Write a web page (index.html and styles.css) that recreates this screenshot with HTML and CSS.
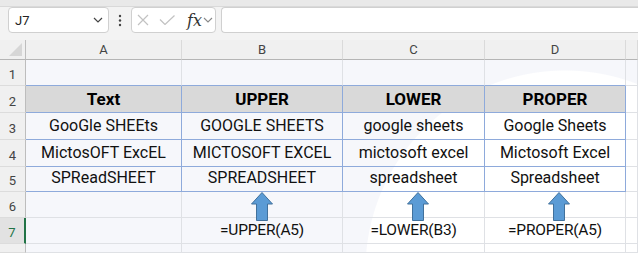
FILE: index.html
```html
<!DOCTYPE html>
<html lang="en">
<head>
    <meta charset="UTF-8">
    <title>Text case functions</title>
    <link rel="stylesheet" href="styles.css">
</head>
<body>
    <div class="topbar"></div>

    <!-- Name box and formula bar -->
    <div class="toolbar">
        <div class="namebox">
            <span>J7</span>
            <svg width="10" height="6" viewBox="0 0 10 6"><path d="M1 1l4 4 4-4" fill="none" stroke="#444" stroke-width="1.2"/></svg>
        </div>
        <div class="dots">
            <svg width="4" height="13" viewBox="0 0 4 13"><circle cx="2" cy="2" r="1.2" fill="#444"/><circle cx="2" cy="6.5" r="1.2" fill="#444"/><circle cx="2" cy="11" r="1.2" fill="#444"/></svg>
        </div>
        <div class="fxbox">
            <svg class="cancel" width="12" height="12" viewBox="0 0 12 12"><path d="M1 1l10 10M11 1L1 11" stroke="#c2c2c2" stroke-width="1.2"/></svg>
            <svg class="enter" width="16" height="10" viewBox="0 0 16 10"><path d="M1 4.5l5 5L15.5 0.5" fill="none" stroke="#c2c2c2" stroke-width="1.2"/></svg>
            <span class="fx">fx</span>
            <svg class="more" width="10" height="6" viewBox="0 0 10 6"><path d="M1 1l4 4 4-4" fill="none" stroke="#888" stroke-width="1.1"/></svg>
        </div>
        <div class="formula"></div>
    </div>

    <!-- Worksheet -->
    <div class="sheet">
        <div class="ch corner"><svg width="26" height="20" viewBox="0 0 26 20"><path d="M22 3v13H9z" fill="#d6d6d6"/></svg></div>
        <div class="ch">A</div>
        <div class="ch">B</div>
        <div class="ch">C</div>
        <div class="ch">D</div>
        <div class="ch"></div>

        <div class="rh">1</div>
        <div class="c tt"></div>
        <div class="c tt"></div>
        <div class="c tt"></div>
        <div class="c tt"></div>
        <div class="c"></div>

        <div class="rh">2</div>
        <div class="c t th">Text</div>
        <div class="c t th">UPPER</div>
        <div class="c t th">LOWER</div>
        <div class="c t th">PROPER</div>
        <div class="c"></div>

        <div class="rh">3</div>
        <div class="c t">GooGle SHEEts</div>
        <div class="c t">GOOGLE SHEETS</div>
        <div class="c t">google sheets</div>
        <div class="c t">Google Sheets</div>
        <div class="c"></div>

        <div class="rh">4</div>
        <div class="c t">MictosOFT ExcEL</div>
        <div class="c t">MICTOSOFT EXCEL</div>
        <div class="c t">mictosoft excel</div>
        <div class="c t">Mictosoft Excel</div>
        <div class="c"></div>

        <div class="rh">5</div>
        <div class="c t">SPReadSHEET</div>
        <div class="c t">SPREADSHEET</div>
        <div class="c t">spreadsheet</div>
        <div class="c t">Spreadsheet</div>
        <div class="c"></div>

        <div class="rh">6</div>
        <div class="c"></div>
        <div class="c"></div>
        <div class="c"></div>
        <div class="c"></div>
        <div class="c"></div>

        <div class="rh sel">7</div>
        <div class="c"></div>
        <div class="c f">=UPPER(A5)</div>
        <div class="c f">=LOWER(B3)</div>
        <div class="c f">=PROPER(A5)</div>
        <div class="c"></div>

        <div class="rh"></div>
        <div class="c"></div>
        <div class="c"></div>
        <div class="c"></div>
        <div class="c"></div>
        <div class="c"></div>

        <!-- Arrow shapes drawn over the grid -->
        <svg class="arrow arrow-b" width="22" height="29" viewBox="0 0 22 29"><path d="M11 .5L21.5 12h-5v16.5h-11V12h-5z" fill="#5b9bd5" stroke="#41719c"/></svg>
        <svg class="arrow arrow-c" width="22" height="29" viewBox="0 0 22 29"><path d="M11 .5L21.5 12h-5v16.5h-11V12h-5z" fill="#5b9bd5" stroke="#41719c"/></svg>
        <svg class="arrow arrow-d" width="22" height="29" viewBox="0 0 22 29"><path d="M11 .5L21.5 12h-5v16.5h-11V12h-5z" fill="#5b9bd5" stroke="#41719c"/></svg>
    </div>
</body>
</html>
```

FILE: styles.css
```css
* {
    box-sizing: border-box;
    margin: 0;
    padding: 0;
}

body {
    font-family: Roboto, 'Liberation Sans', sans-serif;
    background: #f3f3f3;
    overflow: hidden;
    height: 253px;
}

.topbar {
    height: 7px;
    background: #e9e9e9;
    border-bottom: 1px solid #d9d9d9;
}

.toolbar {
    height: 33px;
    display: flex;
    align-items: flex-start;
    padding-left: 8px;
}

.namebox {
    width: 101px;
    height: 26px;
    background: #fff;
    border: 1px solid #d0d0d0;
    border-radius: 4px;
    display: flex;
    align-items: center;
    justify-content: space-between;
    padding: 0 5px 0 6px;
    font-size: 13px;
    color: #222;
}

.dots {
    width: 22px;
    display: flex;
    justify-content: center;
    padding-top: 7px;
}

.fxbox {
    width: 85px;
    height: 26px;
    background: #fff;
    border: 1px solid #d0d0d0;
    border-radius: 4px;
    display: flex;
    align-items: center;
    padding-left: 5px;
}

.fxbox .cancel,
.fxbox .enter {
    margin-right: 10px;
}

.fx {
    font-family: 'DejaVu Serif', 'Liberation Serif', serif;
    font-style: italic;
    font-size: 16px;
    color: #333;
    width: 18px;
    padding-left: 2px;
}

.formula {
    flex: 1;
    height: 26px;
    margin-left: 5px;
    background: #fff;
    border: 1px solid #d0d0d0;
    border-right: none;
    border-radius: 4px 0 0 4px;
}

/* grid */
.sheet {
    position: relative;
    height: 213px;
    display: grid;
    grid-template-columns: 26px 156px 161px 142px 141px 1fr;
    grid-template-rows: 20px 26px 27px 27px 27px 25px 26px 26px 1fr;
    background: radial-gradient(circle 200px at 565px 230px, #fff 199px, #f6f7fb 200px);
}

.ch {
    background: #f0f0f0;
    border-right: 1px solid #dadada;
    border-bottom: 1px solid #b5b5b5;
    font-size: 13px;
    line-height: 19px;
    color: #444;
    text-align: center;
}

.ch.corner {
    border-right-color: #bdbdbd;
}

.rh {
    background: #f0f0f0;
    border-right: 1px solid #bdbdbd;
    border-bottom: 1px solid #dcdcdc;
    font-size: 13px;
    color: #444;
    display: flex;
    align-items: flex-end;
    justify-content: center;
    padding-bottom: 3px;
}

.rh.sel {
    background: #e2e2e2;
    border-right: 2px solid #217346;
    color: #217346;
}

.c {
    border-right: 1px solid #dfe1e5;
    border-bottom: 1px solid #dfe1e5;
    display: flex;
    align-items: flex-end;
    justify-content: center;
    padding-bottom: 3px;
    font-size: 16px;
    line-height: 20px;
    color: #111;
    white-space: nowrap;
}

.c.tt {
    border-bottom-color: #8eaadb;
}

.c.t {
    border-right-color: #8eaadb;
    border-bottom-color: #8eaadb;
}

.c.th {
    background: #d9d9d9;
    font-weight: bold;
    font-size: 17px;
    color: #000;
}

.c.f {
    font-size: 15.5px;
    letter-spacing: -0.2px;
    padding-bottom: 3px;
}

.arrow {
    position: absolute;
    top: 152px;
}

.arrow-b { left: 251px; }
.arrow-c { left: 407px; }
.arrow-d { left: 548px; }
```
